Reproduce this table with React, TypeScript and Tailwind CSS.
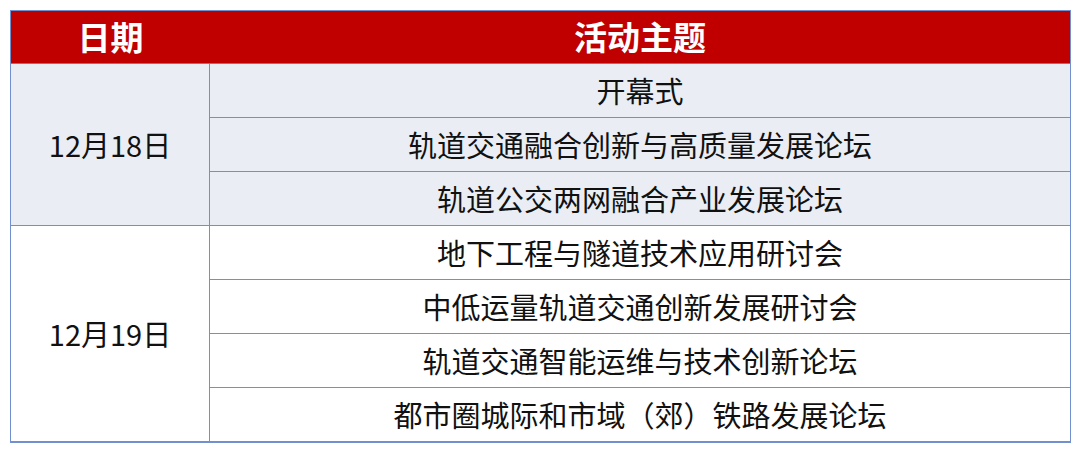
const groups = [
  {
    date: "12月18日",
    bg: "bg-[#eaeef4]",
    items: ["开幕式", "轨道交通融合创新与高质量发展论坛", "轨道公交两网融合产业发展论坛"],
  },
  {
    date: "12月19日",
    bg: "bg-white",
    items: [
      "地下工程与隧道技术应用研讨会",
      "中低运量轨道交通创新发展研讨会",
      "轨道交通智能运维与技术创新论坛",
      "都市圈城际和市域（郊）铁路发展论坛",
    ],
  },
];

export default function App() {
  return (
    <div className="h-[451px] w-[1080px] bg-white pl-[10px] pt-[10px] font-['Noto_Sans_CJK_SC','Noto_Sans',sans-serif] text-[#111]">
      <div className="w-[1061px] border border-b-2 border-[#7290cf]">
        <div className="flex h-[53px] border-b border-[#8576a6] bg-[#c00000] text-[33px] font-bold text-white">
          <div className="flex w-[199px] items-center justify-center">日期</div>
          <div className="flex flex-1 items-center justify-center">活动主题</div>
        </div>
        {groups.map((g, gi) => (
          <div key={g.date} className={`flex ${gi > 0 ? "border-t border-[#7290cf]" : ""} ${g.bg}`}>
            <div className="flex w-[199px] items-center justify-center border-r border-[#7290cf] text-[29px]">
              {g.date}
            </div>
            <div className="flex flex-1 flex-col">
              {g.items.map((t, i) => (
                <div
                  key={t}
                  className={`flex items-center justify-center text-[29px] ${i > 0 ? "h-[54px] border-t border-[#7290cf]" : "h-[53px]"}`}
                >
                  {t}
                </div>
              ))}
            </div>
          </div>
        ))}
      </div>
    </div>
  );
}
